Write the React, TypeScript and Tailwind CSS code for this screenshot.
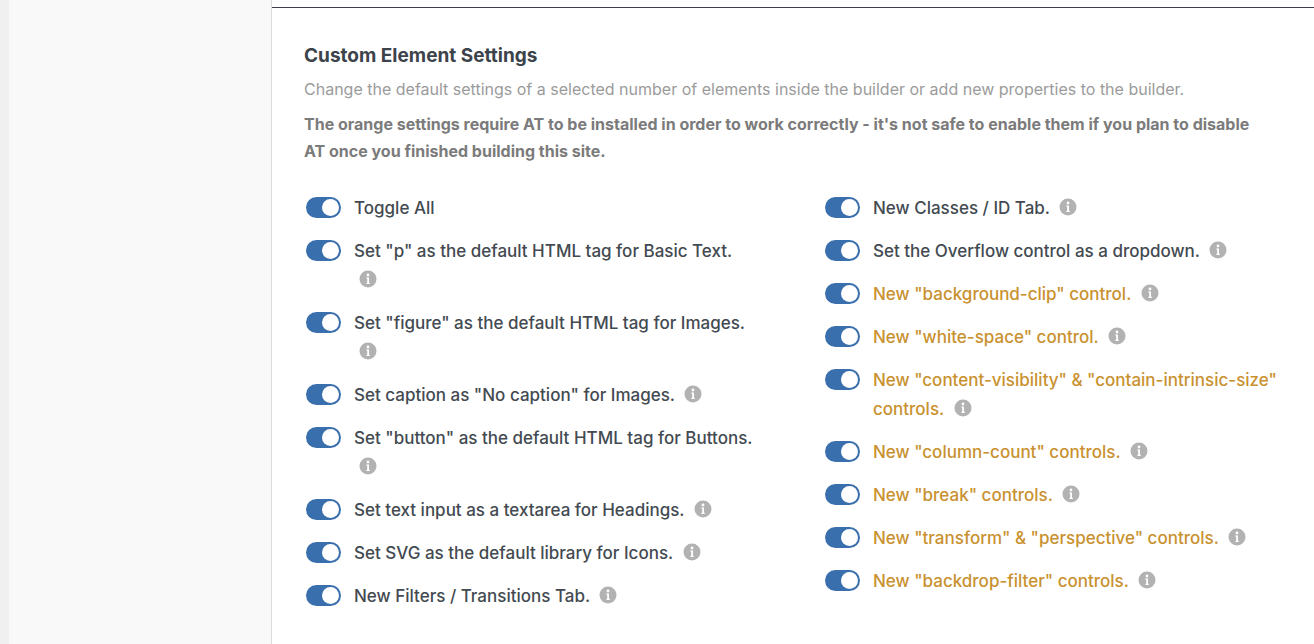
import { useState } from "react";
import { clsx } from "clsx";

type Setting = {
  id: string;
  label: string;
  info?: boolean;
  orange?: boolean;
};

const leftSettings: Setting[] = [
  { id: "toggle-all", label: "Toggle All" },
  { id: "basic-text", label: 'Set "p" as the default HTML tag for Basic Text.', info: true },
  { id: "figure", label: 'Set "figure" as the default HTML tag for Images.', info: true },
  { id: "caption", label: 'Set caption as "No caption" for Images.', info: true },
  { id: "button", label: 'Set "button" as the default HTML tag for Buttons.', info: true },
  { id: "textarea", label: "Set text input as a textarea for Headings.", info: true },
  { id: "svg", label: "Set SVG as the default library for Icons.", info: true },
  { id: "filters", label: "New Filters / Transitions Tab.", info: true },
];

const rightSettings: Setting[] = [
  { id: "classes", label: "New Classes / ID Tab.", info: true },
  { id: "overflow", label: "Set the Overflow control as a dropdown.", info: true },
  { id: "background-clip", label: 'New "background-clip" control.', info: true, orange: true },
  { id: "white-space", label: 'New "white-space" control.', info: true, orange: true },
  {
    id: "content-visibility",
    label: 'New "content-visibility" & "contain-intrinsic-size" controls.',
    info: true,
    orange: true,
  },
  { id: "column-count", label: 'New "column-count" controls.', info: true, orange: true },
  { id: "break", label: 'New "break" controls.', info: true, orange: true },
  { id: "transform", label: 'New "transform" & "perspective" controls.', info: true, orange: true },
  { id: "backdrop-filter", label: 'New "backdrop-filter" controls.', info: true, orange: true },
];

const allIds = [...leftSettings, ...rightSettings].map((s) => s.id);

function InfoIcon() {
  return (
    <svg viewBox="0 0 18 18" className="mx-[5px] mb-1 inline-block size-[18px] align-middle" aria-hidden="true">
      <circle cx="9" cy="9" r="8.5" fill="#b2b2b2" />
      <circle cx="9" cy="5" r="1.4" fill="#fff" />
      <path d="M7.2 7.4H10v5.4h.8V14H7.4v-1.2h.8V8.5h-1z" fill="#fff" />
    </svg>
  );
}

function SettingRow({
  setting,
  checked,
  onChange,
}: {
  setting: Setting;
  checked: boolean;
  onChange: (value: boolean) => void;
}) {
  return (
    <li className="flex items-start gap-[13px]">
      <input
        id={setting.id}
        type="checkbox"
        role="switch"
        checked={checked}
        onChange={(e) => onChange(e.target.checked)}
        className="mt-[3px] flex h-[21px] w-[35px] shrink-0 cursor-pointer appearance-none items-center rounded-full bg-gray-400 px-0.5 transition-colors before:size-[17px] before:rounded-full before:bg-white checked:justify-end checked:bg-[#3a6fad]"
      />
      <label
        htmlFor={setting.id}
        className={clsx(
          "min-w-0 flex-1 cursor-pointer text-[17px] leading-[29px] font-medium",
          setting.orange ? "text-[#c9912f]" : "text-[#434a51]"
        )}
      >
        {setting.label} {setting.info && <InfoIcon />}
      </label>
    </li>
  );
}

export default function App() {
  const [enabled, setEnabled] = useState<string[]>(allIds);

  const handleChange = (id: string, value: boolean) => {
    if (id === "toggle-all") {
      setEnabled(value ? allIds : []);
      return;
    }
    setEnabled((prev) => (value ? [...prev, id] : prev.filter((item) => item !== id)));
  };

  return (
    <div className="flex min-h-screen bg-white font-['Inter','Liberation_Sans',sans-serif]">
      <aside className="w-[272px] shrink-0 border-r border-l-9 border-r-[#dcdcde] border-l-[#f0f0f0] bg-[#f9f9f9]" />

      <main className="min-w-0 flex-1 pt-[7px]">
        <section className="border-t border-[#3c3f48] px-8 pt-[33px] pb-8">
          <h2 className="text-[19px] leading-[30px] font-bold text-[#3c434a]">Custom Element Settings</h2>
          <p className="mt-[5px] text-base leading-[27px] text-[#9b9b9b]">
            Change the default settings of a selected number of elements inside the builder or add new properties to
            the builder.
          </p>
          <p className="mt-2 pr-5 text-base leading-[27px] font-bold text-[#7b7b7b]">
            The orange settings require AT to be installed in order to work correctly - it's not safe to enable them if
            you plan to disable AT once you finished building this site.
          </p>

          <div className="mt-[29px] grid grid-cols-2 gap-[62px] pl-0.5">
            {[leftSettings, rightSettings].map((settings, i) => (
              <ul key={i} className="flex flex-col gap-3.5">
                {settings.map((setting) => (
                  <SettingRow
                    key={setting.id}
                    setting={setting}
                    checked={enabled.includes(setting.id)}
                    onChange={(value) => handleChange(setting.id, value)}
                  />
                ))}
              </ul>
            ))}
          </div>
        </section>
      </main>
    </div>
  );
}
